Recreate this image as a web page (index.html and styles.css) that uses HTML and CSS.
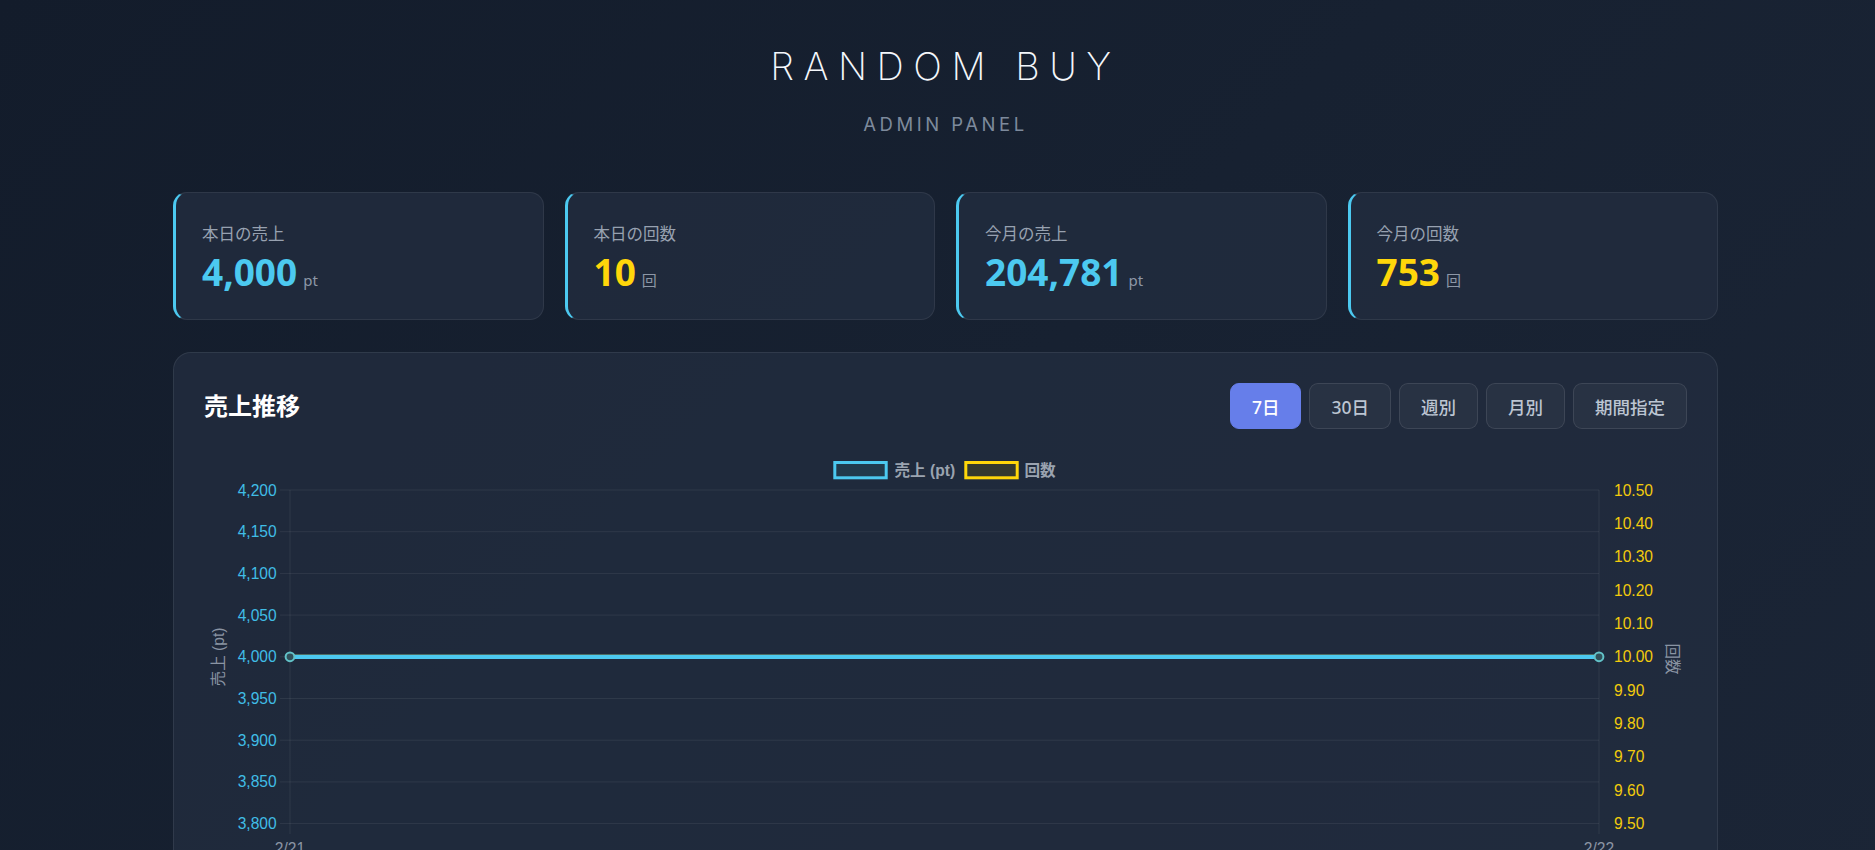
FILE: index.html
```html
<!DOCTYPE html>
<html lang="ja">
<head>
<meta charset="utf-8">
<title>Random Buy Admin</title>
<link rel="stylesheet" href="styles.css">
</head>
<body>
<div class="page">
  <header class="site-header">
    <h1 class="site-title">RANDOM BUY</h1>
    <p class="site-subtitle">ADMIN PANEL</p>
  </header>

  <section class="stats">
    <div class="stat-card">
      <div class="stat-label">本日の売上</div>
      <div class="stat-value"><span class="num cyan">4,000</span><span class="unit">pt</span></div>
    </div>
    <div class="stat-card">
      <div class="stat-label">本日の回数</div>
      <div class="stat-value"><span class="num yellow">10</span><span class="unit">回</span></div>
    </div>
    <div class="stat-card">
      <div class="stat-label">今月の売上</div>
      <div class="stat-value"><span class="num cyan">204,781</span><span class="unit">pt</span></div>
    </div>
    <div class="stat-card">
      <div class="stat-label">今月の回数</div>
      <div class="stat-value"><span class="num yellow">753</span><span class="unit">回</span></div>
    </div>
  </section>

  <section class="panel">
    <div class="panel-header">
      <h2 class="panel-title">売上推移</h2>
      <div class="range-buttons">
        <button class="range-btn active">7日</button>
        <button class="range-btn">30日</button>
        <button class="range-btn">週別</button>
        <button class="range-btn">月別</button>
        <button class="range-btn">期間指定</button>
      </div>
    </div>
    <svg class="chart" width="1483" height="450" viewBox="0 0 1483 450" xmlns="http://www.w3.org/2000/svg">
      <!-- legend -->
      <rect x="630.8" y="22.5" width="51.4" height="15.3" fill="#213a4c" stroke="#4cc9f0" stroke-width="3"/>
      <text class="legend-text" x="690.5" y="30">売上 (pt)</text>
      <rect x="761.8" y="22.5" width="51.4" height="15.3" fill="#34392f" stroke="#ffd60a" stroke-width="3"/>
      <text class="legend-text" x="820.5" y="30">回数</text>

      <!-- grid -->
      <g class="grid">
        <line x1="76" y1="50" x2="1395" y2="50"/>
        <line x1="76" y1="91.7" x2="1395" y2="91.7"/>
        <line x1="76" y1="133.4" x2="1395" y2="133.4"/>
        <line x1="76" y1="175.1" x2="1395" y2="175.1"/>
        <line x1="76" y1="216.8" x2="1395" y2="216.8"/>
        <line x1="76" y1="258.5" x2="1395" y2="258.5"/>
        <line x1="76" y1="300.2" x2="1395" y2="300.2"/>
        <line x1="76" y1="341.9" x2="1395" y2="341.9"/>
        <line x1="76" y1="383.6" x2="1395" y2="383.6"/>
        <line x1="86" y1="50" x2="86" y2="394"/>
        <line x1="1395" y1="50" x2="1395" y2="394"/>
      </g>

      <!-- left ticks -->
      <g class="tick-left">
        <text x="72.7" y="50">4,200</text>
        <text x="72.7" y="91.7">4,150</text>
        <text x="72.7" y="133.4">4,100</text>
        <text x="72.7" y="175.1">4,050</text>
        <text x="72.7" y="216.8">4,000</text>
        <text x="72.7" y="258.5">3,950</text>
        <text x="72.7" y="300.2">3,900</text>
        <text x="72.7" y="341.9">3,850</text>
        <text x="72.7" y="383.6">3,800</text>
      </g>

      <!-- right ticks -->
      <g class="tick-right">
        <text x="1410" y="50">10.50</text>
        <text x="1410" y="83.4">10.40</text>
        <text x="1410" y="116.7">10.30</text>
        <text x="1410" y="150.1">10.20</text>
        <text x="1410" y="183.4">10.10</text>
        <text x="1410" y="216.8">10.00</text>
        <text x="1410" y="250.2">9.90</text>
        <text x="1410" y="283.5">9.80</text>
        <text x="1410" y="316.9">9.70</text>
        <text x="1410" y="350.2">9.60</text>
        <text x="1410" y="383.6">9.50</text>
      </g>

      <!-- axis titles -->
      <text class="axis-title" x="14" y="217" transform="rotate(-90 14 217)">売上 (pt)</text>
      <text class="axis-title" x="1468" y="219" transform="rotate(90 1468 219)">回数</text>

      <!-- x labels -->
      <text class="x-label" x="86" y="408">2/21</text>
      <text class="x-label" x="1395" y="408">2/22</text>

      <!-- data -->
      <line x1="86" y1="216.8" x2="1395" y2="216.8" stroke="#e0c020" stroke-width="4"/>
      <line x1="86" y1="216.8" x2="1395" y2="216.8" stroke="#4cc9f0" stroke-width="4.2"/>
      <circle cx="86" cy="216.8" r="4.4" fill="#31505a" stroke="#62c2c8" stroke-width="2"/>
      <circle cx="1395" cy="216.8" r="4.4" fill="#31505a" stroke="#62c2c8" stroke-width="2"/>
    </svg>
  </section>
</div>
</body>
</html>
```

FILE: styles.css
```css
* {
  box-sizing: border-box;
}

html, body {
  margin: 0;
  padding: 0;
}

body {
  min-height: 100vh;
  background: linear-gradient(135deg, #131c2b 0%, #172131 50%, #1b2536 100%);
  font-family: "Noto Sans", "Noto Sans CJK JP", sans-serif;
  color: #e2e8f0;
  padding-left: 16px;
}

.page {
  max-width: 1545px;
  margin: 0 auto;
}

.site-header {
  padding-top: 43px;
  text-align: center;
}

.site-title {
  margin: 0;
  font-family: "Inter", "Noto Sans", sans-serif;
  font-weight: 200;
  font-size: 38px;
  line-height: 46px;
  letter-spacing: 0.25em;
  color: #f4f7fb;
}

.site-subtitle {
  margin: 23px 0 0;
  font-family: "Inter", "Noto Sans", sans-serif;
  font-weight: 400;
  font-size: 18.5px;
  line-height: 24px;
  letter-spacing: 0.19em;
  color: #7d8a9c;
}

.stats {
  margin-top: 56px;
  display: grid;
  grid-template-columns: repeat(4, 1fr);
  gap: 21px;
}

.stat-card {
  height: 128px;
  background: rgba(35, 46, 64, 0.75);
  border: 1px solid rgba(255, 255, 255, 0.07);
  border-left: 3px solid #4cc9f0;
  border-radius: 14px;
  padding: 29px 24px 25px 26px;
}

.stat-label {
  font-size: 16.5px;
  line-height: 24px;
  color: #97a1b0;
}

.stat-value {
  margin-top: 4px;
  display: flex;
  align-items: baseline;
  line-height: 44px;
}

.num {
  font-size: 37px;
  font-weight: 700;
}

.cyan {
  color: #4cc9f0;
}

.yellow {
  color: #ffd60a;
}

.unit {
  margin-left: 6px;
  font-size: 15px;
  color: #8d97a6;
}

.panel {
  margin-top: 32px;
  background: rgba(35, 46, 64, 0.75);
  border: 1px solid rgba(255, 255, 255, 0.08);
  border-radius: 18px;
  padding: 30px;
}

.panel-header {
  display: flex;
  justify-content: space-between;
  align-items: center;
}

.panel-title {
  margin: 0;
  font-size: 24px;
  font-weight: 700;
  line-height: 30px;
  color: #ffffff;
}

.range-buttons {
  display: flex;
  gap: 8px;
}

.range-btn {
  height: 46px;
  padding: 0 21px;
  border-radius: 9px;
  border: 1px solid rgba(255, 255, 255, 0.1);
  background: rgba(255, 255, 255, 0.04);
  color: #bcc5d2;
  font-family: "Noto Sans", "Noto Sans CJK JP", sans-serif;
  font-size: 17.5px;
  font-weight: 500;
}

.range-btn.active {
  background: #667eea;
  border-color: #667eea;
  color: #ffffff;
}

.chart {
  display: block;
  margin-top: 11px;
  font-family: "Liberation Sans", "Noto Sans CJK JP", sans-serif;
}

.chart text {
  font-size: 15.6px;
  dominant-baseline: central;
}

.legend-text {
  font-weight: 700;
  fill: #9aa3b0;
}

.grid line {
  stroke: rgba(255, 255, 255, 0.07);
  stroke-width: 1;
}

.tick-left text {
  text-anchor: end;
  fill: #40bde6;
}

.tick-right text {
  text-anchor: start;
  fill: #f2cb0c;
}

.axis-title {
  text-anchor: middle;
  fill: #8a94a3;
}

.x-label {
  text-anchor: middle;
  fill: #8a94a3;
}
```
